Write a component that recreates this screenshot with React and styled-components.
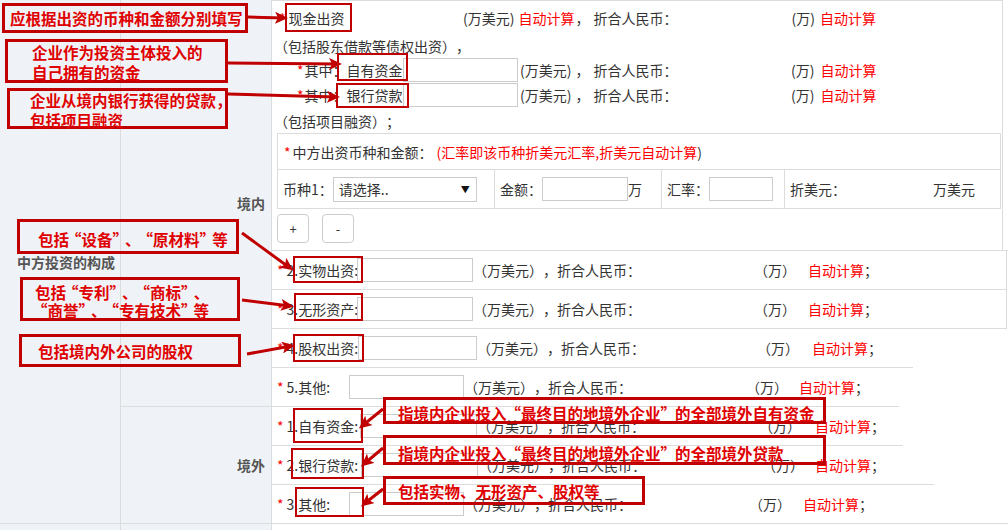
import React from "react";
import styled, { createGlobalStyle } from "styled-components";

const LINE = "#dcdcdc";
const SIDE_BG = "#eff3f7";
const MARK = "#c00000";
const NOTE_TEXT = "#e00000";

const GlobalStyle = createGlobalStyle`
  *, *::before, *::after { box-sizing: border-box; }
  html, body { margin: 0; padding: 0; background: #ffffff; }
  body {
    font-family: "Noto Sans CJK SC", "Noto Sans", sans-serif;
    font-size: 14px;
    line-height: 20px;
    color: #333333;
    text-spacing-trim: space-all;
  }
`;

const Page = styled.div`
  position: relative;
  width: 1008px;
  height: 530px;
  overflow: hidden;
  display: grid;
  grid-template-columns: 121px 151px 1fr;
  grid-template-rows: 407px 117px 1fr;
  background: #ffffff;
`;

const SectionTitle = styled.div`
  grid-column: 1;
  grid-row: 1 / 3;
  background: ${SIDE_BG};
  border-right: 1px solid ${LINE};
  border-bottom: 1px solid ${LINE};
  display: flex;
  align-items: center;
  padding-left: 17px;
  font-weight: bold;
  color: #555555;
`;

const GroupLabel = styled.div`
  grid-column: 2;
  grid-row: ${(p) => p.$row};
  background: ${SIDE_BG};
  border-right: 1px solid ${LINE};
  border-bottom: 1px solid ${LINE};
  display: flex;
  align-items: center;
  justify-content: flex-end;
  padding-right: 6px;
  font-weight: bold;
  color: #555555;
`;

const SideFiller = styled.div`
  grid-column: ${(p) => p.$col};
  grid-row: 3;
  background: ${SIDE_BG};
  border-right: 1px solid ${LINE};
`;

const Block = styled.div`
  grid-column: 3;
  grid-row: ${(p) => p.$row};
  display: flex;
  flex-direction: column;
  min-width: 0;
`;

const CashBlock = styled.div`
  height: 251px;
  flex: none;
  border-bottom: 1px solid ${LINE};
`;

const CashFrame = styled.div`
  width: 731px;
  height: 250px;
  border-top: 1px solid ${LINE};
  border-right: 1px solid ${LINE};
  display: flex;
  flex-direction: column;
`;

const CashLine = styled.div`
  height: ${(p) => p.$h}px;
  padding-left: ${(p) => p.$pl}px;
  display: flex;
  align-items: center;
  white-space: nowrap;
  flex: none;
`;

const Fixed = styled.span`
  display: inline-flex;
  align-items: center;
  flex: none;
  width: ${(p) => p.$w}px;
  padding-left: ${(p) => p.$pl || 0}px;
  white-space: nowrap;
`;

const Star = styled.span`
  color: #ff0000;
  margin-right: ${(p) => (p.$mr === undefined ? 3 : p.$mr)}px;
`;

const Red = styled.span`
  color: #ff0000;
  margin-left: ${(p) => p.$ml || 0}px;
`;

const Comma = styled.span`
  margin-left: ${(p) => p.$ml || 0}px;
  margin-right: ${(p) => p.$mr || 0}px;
`;

const Input = styled.input`
  flex: none;
  width: ${(p) => p.$w}px;
  height: 24px;
  margin: 0;
  padding: 0 4px;
  border: 1px solid #cccccc;
  background: #ffffff;
  font: inherit;
  outline: none;
`;

const RateTable = styled.div`
  margin-left: 5px;
  width: 724px;
  flex: none;
  border: 1px solid ${LINE};
  display: grid;
  grid-template-columns: 217px 167px 123px 1fr;
`;

const HeaderCell = styled.div`
  grid-column: 1 / -1;
  height: 36px;
  border-bottom: 1px solid ${LINE};
  display: flex;
  align-items: center;
  padding-left: 6px;
  white-space: nowrap;
`;

const RateCell = styled.div`
  height: 38px;
  display: flex;
  align-items: center;
  padding-left: 5px;
  border-right: ${(p) => (p.$last ? "none" : `1px solid ${LINE}`)};
  white-space: nowrap;
`;

const FakeSelect = styled.div`
  flex: none;
  width: 144px;
  height: 25px;
  border: 1px solid #cccccc;
  background: #ffffff;
  display: flex;
  align-items: center;
  justify-content: space-between;
  padding: 0 6px 0 5px;
  color: #333333;
`;

const Caret = styled.span`
  font-size: 9px;
  color: #111111;
  line-height: 1;
`;

const ButtonRow = styled.div`
  display: flex;
  gap: 13px;
  margin: 5px 0 0 5px;
`;

const StepButton = styled.button`
  width: 32px;
  height: 29px;
  padding: 0;
  border: 1px solid #cccccc;
  border-radius: 4px;
  background: #ffffff;
  color: #333333;
  font-family: inherit;
  font-size: 13px;
  line-height: 1;
`;

const FieldRowBox = styled.div`
  flex: none;
  height: 39px;
  width: ${(p) => (p.$w ? `${p.$w}px` : "100%")};
  padding-left: 5px;
  display: flex;
  align-items: center;
  border-bottom: 1px solid ${LINE};
  border-right: ${(p) => (p.$edge ? `1px solid ${LINE}` : "none")};
  white-space: nowrap;
`;

/* ---------- annotation overlay ---------- */

const Overlay = styled.div`
  position: absolute;
  inset: 0;
  pointer-events: none;
`;

const NoteBox = styled.div`
  position: absolute;
  left: ${(p) => p.$x}px;
  top: ${(p) => p.$y}px;
  width: ${(p) => p.$w}px;
  height: ${(p) => p.$h}px;
  border: 3px solid ${MARK};
  padding-left: ${(p) => p.$pl}px;
  padding-top: ${(p) => p.$pt || 0}px;
  display: flex;
  flex-direction: column;
  justify-content: center;
  color: ${NOTE_TEXT};
  font-weight: bold;
  font-size: 15.5px;
  line-height: ${(p) => p.$lh || 20}px;
  white-space: nowrap;
`;

const Quote = styled.span`
  margin-left: ${(p) => (p.$open ? -p.$tight : 0)}px;
  margin-right: ${(p) => (p.$open ? 0 : -p.$tight)}px;
`;

const HighlightFrame = styled.div`
  position: absolute;
  left: ${(p) => p.$x}px;
  top: ${(p) => p.$y}px;
  width: ${(p) => p.$w}px;
  height: ${(p) => p.$h}px;
  border: 2px solid ${MARK};
`;

const ArrowLayer = styled.svg`
  position: absolute;
  left: 0;
  top: 0;
  width: 1008px;
  height: 530px;
`;

const notes = [
  { x: 2, y: 3, w: 246, h: 30, pl: 5, lines: ["应根据出资的币种和金额分别填写"] },
  { x: 5, y: 39, w: 223, h: 44, pl: 24, pt: 2, lines: ["企业作为投资主体投入的", "自己拥有的资金"] },
  { x: 7, y: 88, w: 221, h: 41, pl: 20, pt: 3, lines: ["企业从境内银行获得的贷款，", "包括项目融资"] },
  { x: 17, y: 219, w: 222, h: 35, pl: 18, pt: 4, q: 3, lines: ["包括“设备”、“原材料”等"] },
  { x: 20, y: 277, w: 220, h: 44, pl: 12, pt: 4, lh: 18, q: 3, lines: ["包括“专利”、“商标”、", "“商誉”、“专有技术”等"] },
  { x: 19, y: 334, w: 222, h: 33, pl: 16, lines: ["包括境内外公司的股权"] },
  { x: 383, y: 397, w: 443, h: 27, pl: 12, pt: 5, q: 1, lines: ["指境内企业投入“最终目的地境外企业”的全部境外自有资金"] },
  { x: 383, y: 435, w: 443, h: 30, pl: 12, pt: 5, q: 1, lines: ["指境内企业投入“最终目的地境外企业”的全部境外贷款"] },
  { x: 383, y: 476, w: 262, h: 29, pl: 12, lines: ["包括实物、无形资产、股权等"] },
];

const highlights = [
  { x: 285, y: 3, w: 67, h: 29 },
  { x: 337, y: 53, w: 71, h: 28 },
  { x: 336, y: 83, w: 73, h: 25 },
  { x: 293, y: 256, w: 70, h: 27 },
  { x: 294, y: 293, w: 69, h: 28 },
  { x: 293, y: 334, w: 71, h: 28 },
  { x: 293, y: 408, w: 70, h: 35 },
  { x: 291, y: 448, w: 73, h: 31 },
  { x: 295, y: 487, w: 69, h: 30 },
];

const arrows = [
  [248, 17, 284, 18],
  [228, 63, 338, 64],
  [228, 94, 336, 97],
  [242, 233, 290, 268],
  [242, 300, 290, 306],
  [247, 354, 291, 346],
  [383, 409, 362, 426],
  [383, 448, 364, 464],
  [383, 489, 364, 504],
];

function noteText(text, tight) {
  if (!tight) return text;
  return text.split(/([“”])/).map((part, i) =>
    part === "“" || part === "”" ? (
      <Quote key={i} $open={part === "“"} $tight={tight}>
        {part}
      </Quote>
    ) : (
      part
    )
  );
}

function Annotations() {
  return (
    <Overlay>
      {highlights.map((h, i) => (
        <HighlightFrame key={i} $x={h.x} $y={h.y} $w={h.w} $h={h.h} />
      ))}
      {notes.map((n, i) => (
        <NoteBox key={i} $x={n.x} $y={n.y} $w={n.w} $h={n.h} $pl={n.pl} $pt={n.pt} $lh={n.lh}>
          {n.lines.map((l) => (
            <span key={l}>{noteText(l, n.q)}</span>
          ))}
        </NoteBox>
      ))}
      <ArrowLayer viewBox="0 0 1008 530">
        <defs>
          <marker
            id="arrowHead"
            markerUnits="userSpaceOnUse"
            markerWidth="13"
            markerHeight="12"
            refX="9"
            refY="6"
            orient="auto"
          >
            <path d="M0,0 L13,6 L0,12 L3,6 Z" fill={MARK} />
          </marker>
        </defs>
        {arrows.map(([x1, y1, x2, y2], i) => (
          <line
            key={i}
            x1={x1}
            y1={y1}
            x2={x2}
            y2={y2}
            stroke={MARK}
            strokeWidth="3"
            markerEnd="url(#arrowHead)"
          />
        ))}
      </ArrowLayer>
    </Overlay>
  );
}

/* ---------- form rows ---------- */

function AmountRow({ num, label, inputX, inputW, wanX, autoX, w, edge }) {
  const leadW = inputX - 277;
  const inputEnd = inputX + inputW;
  const unitW = wanX - 11 - inputEnd;
  return (
    <FieldRowBox $w={w} $edge={edge}>
      <Fixed $w={leadW}>
        <Star>*</Star>
        {num}
        {label}
      </Fixed>
      <Input $w={inputW} />
      <Fixed $w={unitW}>（万美元），折合人民币：</Fixed>
      <span>（万）</span>
      <Red $ml={autoX - wanX - 31}>自动计算</Red>；
    </FieldRowBox>
  );
}

const domesticRows = [
  { num: "2.", label: "实物出资:", inputX: 357, inputW: 116, wanX: 765, autoX: 808, w: 735, edge: true },
  { num: "3.", label: "无形资产:", inputX: 357, inputW: 116, wanX: 765, autoX: 808, w: 735, edge: true },
  { num: "4.", label: "股权出资:", inputX: 358, inputW: 119, wanX: 768, autoX: 812, w: 641 },
  { num: "5.", label: "其他:", inputX: 349, inputW: 115, wanX: 757, autoX: 799, w: 627 },
];

const overseasRows = [
  { num: "1.", label: "自有资金:", inputX: 360, inputW: 117, wanX: 770, autoX: 815, w: 631 },
  { num: "2.", label: "银行贷款:", inputX: 361, inputW: 117, wanX: 773, autoX: 815, w: 662 },
  { num: "3.", label: "其他:", inputX: 349, inputW: 115, wanX: 760, autoX: 803 },
];

function CashSection() {
  return (
    <CashBlock>
      <CashFrame>
        <CashLine $h={34} $pl={7}>
          <Fixed $w={184}>
            <Star>*</Star>现金出资
          </Fixed>
          <span>(万美元)</span>
          <Red $ml={4}>自动计算</Red>
          <Fixed $w={217}>
            <Comma $ml={1} $mr={4}>，</Comma>折合人民币：
          </Fixed>
          <span>(万)</span>
          <Red $ml={5}>自动计算</Red>
        </CashLine>
        <CashLine $h={22} $pl={2}>（包括股东借款等债权出资），</CashLine>
        <CashLine $h={25} $pl={25}>
          <Fixed $w={106}>
            <Star $mr={1}>*</Star>其中：自有资金
          </Fixed>
          <Input $w={115} />
          <Fixed $w={273} $pl={2}>
            (万美元)<Comma $ml={4} $mr={4}>，</Comma>折合人民币：
          </Fixed>
          <span>(万)</span>
          <Red $ml={6}>自动计算</Red>
        </CashLine>
        <CashLine $h={26} $pl={25}>
          <Fixed $w={106}>
            <Star $mr={1}>*</Star>其中：银行贷款
          </Fixed>
          <Input $w={115} />
          <Fixed $w={273} $pl={2}>
            (万美元)<Comma $ml={4} $mr={4}>，</Comma>折合人民币：
          </Fixed>
          <span>(万)</span>
          <Red $ml={6}>自动计算</Red>
        </CashLine>
        <CashLine $h={25} $pl={2}>（包括项目融资）；</CashLine>
        <RateTable>
          <HeaderCell>
            <Star $mr={2}>*</Star>中方出资币种和金额：
            <Red $ml={4}>(汇率即该币种折美元汇率,折美元自动计算</Red>)
          </HeaderCell>
          <RateCell>
            币种1：
            <FakeSelect>
              <span>请选择..</span>
              <Caret>▼</Caret>
            </FakeSelect>
          </RateCell>
          <RateCell>
            金额：
            <Input $w={86} />万
          </RateCell>
          <RateCell>
            汇率：
            <Input $w={64} />
          </RateCell>
          <RateCell $last>
            <Fixed $w={143}>折美元：</Fixed>万美元
          </RateCell>
        </RateTable>
        <ButtonRow>
          <StepButton type="button">+</StepButton>
          <StepButton type="button">-</StepButton>
        </ButtonRow>
      </CashFrame>
    </CashBlock>
  );
}

export default function App() {
  return (
    <>
      <GlobalStyle />
      <Page>
        <SectionTitle>中方投资的构成</SectionTitle>
        <GroupLabel $row={1}>境内</GroupLabel>
        <GroupLabel $row={2}>境外</GroupLabel>
        <SideFiller $col={1} />
        <SideFiller $col={2} />
        <Block $row={1}>
          <CashSection />
          {domesticRows.map((r) => (
            <AmountRow key={r.num + r.label} {...r} />
          ))}
        </Block>
        <Block $row={2}>
          {overseasRows.map((r) => (
            <AmountRow key={r.num + r.label} {...r} />
          ))}
        </Block>
        <Annotations />
      </Page>
    </>
  );
}
